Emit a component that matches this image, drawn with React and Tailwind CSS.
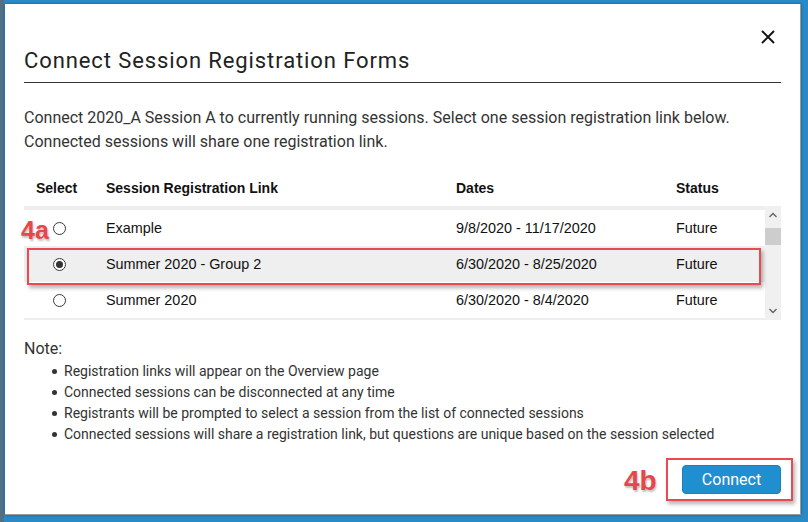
import React from "react";

const rows = [
  { name: "Example", dates: "9/8/2020 - 11/17/2020", status: "Future", checked: false },
  { name: "Summer 2020 - Group 2", dates: "6/30/2020 - 8/25/2020", status: "Future", checked: true },
  { name: "Summer 2020", dates: "6/30/2020 - 8/4/2020", status: "Future", checked: false },
];

const notes = [
  "Registration links will appear on the Overview page",
  "Connected sessions can be disconnected at any time",
  "Registrants will be prompted to select a session from the list of connected sessions",
  "Connected sessions will share a registration link, but questions are unique based on the session selected",
];

function Radio({ checked }) {
  return (
    <span className="ml-[29px] flex h-[13px] w-[13px] items-center justify-center rounded-full border border-[#3a3a3a] bg-white">
      {checked && <span className="h-[7px] w-[7px] rounded-full bg-[#333]" />}
    </span>
  );
}

export default function App() {
  return (
    <div className="relative flex h-[522px] w-[808px] overflow-hidden bg-[#2a8ac8] font-['Roboto',sans-serif]">
      <div className="w-[4px] bg-[#50708a]" />
      <div className="relative ml-[1px] mt-[4px] h-[511px] w-[796px] border-r border-b border-[#9a9a9a] bg-white px-[19px] shadow-[0_0_3px_rgba(0,0,0,0.35)]">
        <button className="absolute right-[24px] top-[25px] text-[#111]">
          <svg width="16" height="16" viewBox="0 0 16 16" fill="none" stroke="#111" strokeWidth="1.9">
            <path d="M2 2 L14 14 M14 2 L2 14" />
          </svg>
        </button>
        <div className="border-b border-[#333] pb-[6px] pt-[42px] text-[22px] leading-[30px] tracking-[0.9px] text-[#222]">
          Connect Session Registration Forms
        </div>
        <p className="mt-[23px] text-[16px] leading-[24px] text-[#333]">
          Connect 2020_A Session A to currently running sessions. Select one session registration link below.
          <br />
          Connected sessions will share one registration link.
        </p>

        <div className="mt-[16px] font-['Liberation_Sans',Arial,sans-serif] text-[14.4px] text-[#111]">
          <div className="flex h-[36px] items-center text-[14px] font-bold">
            <div className="w-[82px] pl-[12px]">Select</div>
            <div className="w-[350px]">Session Registration Link</div>
            <div className="w-[220px]">Dates</div>
            <div>Status</div>
          </div>
          <div className="flex">
            <div className="flex-1 border-t-[4px] border-b-[2px] border-[#eeeeee]">
              {rows.map((r) => (
                <div
                  key={r.name}
                  className={`flex h-[36px] items-center ${r.checked ? "bg-[#efefef]" : "bg-white"}`}
                >
                  <div className="w-[82px]">
                    <Radio checked={r.checked} />
                  </div>
                  <div className="w-[350px] pt-[2px]">{r.name}</div>
                  <div className="w-[220px] pt-[2px]">{r.dates}</div>
                  <div className="pt-[2px]">{r.status}</div>
                </div>
              ))}
            </div>
            <div className="flex w-[16px] flex-col items-center bg-[#f0f0f0]">
              <svg className="mt-[5px]" width="10" height="8" viewBox="0 0 10 8" fill="none" stroke="#606060" strokeWidth="1.3">
                <path d="M1.5 6 L5 2.5 L8.5 6" />
              </svg>
              <div className="mt-[9px] h-[17px] w-[16px] bg-[#cdcdcd]" />
              <div className="flex-1" />
              <svg className="mb-[5px]" width="10" height="8" viewBox="0 0 10 8" fill="none" stroke="#606060" strokeWidth="1.3">
                <path d="M1.5 2 L5 5.5 L8.5 2" />
              </svg>
            </div>
          </div>
        </div>

        <div className="mt-[17px] text-[16px] leading-[24px] text-[#333]">Note:</div>
        <ul className="pl-[28px] text-[14px] leading-[21px] text-[#333]">
          {notes.map((n) => (
            <li key={n} className="flex items-center">
              <span className="mr-[7px] h-[5px] w-[5px] rounded-full bg-[#333]" />
              {n}
            </li>
          ))}
        </ul>

        <div className="mt-[20px] flex justify-end">
          <button className="h-[29px] w-[99px] rounded-[4px] border border-[#1a7fbd] bg-[#1f8fd0] text-[16px] text-white">
            Connect
          </button>
        </div>

        {/* annotations */}
        <div className="pointer-events-none absolute left-[22px] top-[244px] h-[37px] w-[734px] border-2 border-[#ea4a4f] shadow-[2px_3px_4px_rgba(0,0,0,0.3)]" />
        <div className="pointer-events-none absolute left-[16px] top-[211px] font-['Liberation_Sans',Arial,sans-serif] text-[25px] font-bold leading-[30px] text-[#e8464b] [text-shadow:1px_2px_2px_rgba(0,0,0,0.25)]">
          4a
        </div>
        <div className="pointer-events-none absolute left-[661px] top-[454px] h-[43px] w-[127px] border-2 border-[#ea4a4f] shadow-[2px_3px_4px_rgba(0,0,0,0.3)]" />
        <div className="pointer-events-none absolute left-[619px] top-[460px] font-['Liberation_Sans',Arial,sans-serif] text-[28px] font-bold leading-[34px] text-[#e8464b] [text-shadow:1px_2px_2px_rgba(0,0,0,0.25)]">
          4b
        </div>
      </div>
      <div className="mt-[4px] w-[3px] bg-[#2a8ac8]" />
    </div>
  );
}
